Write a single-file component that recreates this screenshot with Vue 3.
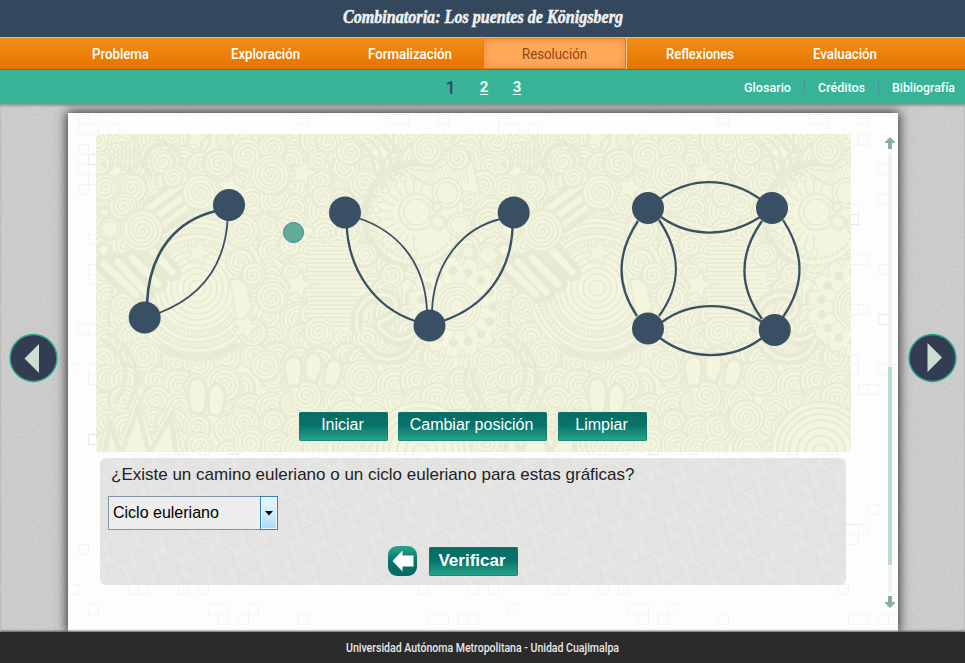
<script setup>
const tabs = [
  { label: 'Problema', w: 57 },
  { label: 'Exploración', w: 69 },
  { label: 'Formalización', w: 84 },
  { label: 'Resolución', w: 65, active: true },
  { label: 'Reflexiones', w: 68 },
  { label: 'Evaluación', w: 64 },
]
const links = [
  { label: 'Glosario', w: 47 },
  { label: 'Créditos', w: 47 },
  { label: 'Bibliografía', w: 63 },
]

const nodes = [
  [229, 205], [144.7, 317.5], [345, 212.5], [513.7, 212.5], [429.5, 325.5],
  [648, 208], [772, 208], [648, 328.5], [774.7, 330],
]
const edges = [
  ['M147,304 C149,250 178,220 216,211', 2.6],
  ['M227.7,219 C225,265 203,296 159,313', 1.8],
  ['M346.7,226 C349,272 376,308 415,321', 2.3],
  ['M358,218 C395,230 425,260 427,311', 1.8],
  ['M432,311 C434,260 465,227 501,219', 1.8],
  ['M512.7,226 C511,272 486,306 443,321', 2.3],
  ['M660,199 C690,176.5 728,176.5 760,199', 2.3],
  ['M661,217 C690,237.7 728,237.7 760,217', 2.3],
  ['M662,322 C690,300.7 732,300.7 762,322', 2.3],
  ['M660,338 C690,360.7 732,360.7 762,338', 2.3],
  ['M638,221 C616,254 616,285 637,316', 2.3],
  ['M659,220 C681.7,254 681.7,285 659,316', 2.3],
  ['M762,221 C738.7,254 738.7,287 762,319', 2.3],
  ['M783,220 C805,254 805,285 783,317', 2.3],
]

// Doodle wallpaper: one 400px wide tile, drawn back to front.
const spiral = (x, y, r) => {
  let d = ''
  const turns = r / 4.4
  const steps = Math.round(turns * 14)
  for (let i = 0; i <= steps; i++) {
    const a = (i / 14) * Math.PI * 2 + x
    const q = (r * i) / steps
    d += `${i ? 'L' : 'M'}${(x + q * Math.cos(a)).toFixed(1)},${(y + q * Math.sin(a)).toFixed(1)}`
  }
  return { x, y, r, d }
}
let seed = 11
const rnd = () => (seed = (seed * 16807) % 2147483647) / 2147483647
const filler = []
for (let y = 6; y < 330; y += 22)
  for (let x = 8; x < 400; x += 24)
    filler.push(spiral(x + rnd() * 14 - 7, y + rnd() * 12 - 6, 12 + rnd() * 6))
const spirals = [
  [151, 21, 16], [177, 13, 14], [122, 30, 15], [104, 59, 18], [146, 96, 17], [67, 28, 12], [77, 44, 10],
  [36, 54, 15], [27, 73, 14], [9, 54, 14], [46, 96, 21], [249, 34, 14], [232, 8, 12], [224, 46, 12],
  [144, 128, 14], [157, 141, 12], [176, 164, 16], [194, 138, 9], [157, 198, 14], [26, 171, 12],
  [222, 198, 15], [227, 63, 11], [254, 18, 13], [332, 16, 16], [362, 24, 12], [269, 121, 12],
  [296, 141, 12], [175, 41, 20], [48, 222, 17], [128, 250, 18], [170, 232, 15], [210, 262, 16], [250, 284, 18],
].map((s) => spiral(...s))
const rings = [[351, 59, 15], [321, 78, 18], [363, 91, 12], [392, 121, 12], [341, 73, 5], [342, 88, 8], [372, 118, 8], [14, 95, 11], [8, 78, 6], [8, 116, 7]]
const star = (x, y, r) =>
  Array.from({ length: 10 }, (_, i) => {
    const q = i % 2 ? r * 0.45 : r
    const a = (i * Math.PI) / 5 - 1.3
    return `${(x + q * Math.cos(a)).toFixed(1)},${(y + q * Math.sin(a)).toFixed(1)}`
  }).join(' ')
const stars = [star(102, 119, 14), star(207, 39, 15), star(202, 151, 16), star(149, 193, 16), star(100, 4, 13), star(133, 54, 15)]
const petals = Array.from({ length: 15 }, (_, i) => {
  const a = (i * Math.PI * 2) / 15
  const c = Math.cos(a), s = Math.sin(a)
  return { x1: 26 * c, y1: 26 * s, x: 38 * c, y: 38 * s, ox: 45 * c, oy: 45 * s }
})
const spokes = Array.from({ length: 13 }, (_, i) => {
  const a = Math.PI * 0.5 + (i * Math.PI) / 11
  return { c: Math.cos(a), s: Math.sin(a) }
})
const beads = Array.from({ length: 14 }, (_, i) => {
  const a = Math.PI * 0.75 + (i * Math.PI) / 10
  return [67 + 18 * Math.cos(a), 28 + 18 * Math.sin(a)]
})

// Embossed squares of the paper background, on a 10px grid.
const squares = []
for (let i = 0; i < 210; i++) {
  const w = rnd() > 0.7 ? 20 : 10
  squares.push([Math.floor(rnd() * 41) * 10 + 0.5, Math.floor(rnd() * 51) * 10 + 1.5, w, rnd() > 0.9 ? '#e9e9e9' : '#f4f4f4'])
}
</script>

<template>
  <div class="page">
    <header class="title">
      <svg width="284" height="34"><text x="2" y="23" textLength="280" lengthAdjust="spacingAndGlyphs">Combinatoria: Los puentes de Königsberg</text></svg>
    </header>

    <nav class="tabs">
      <a v-for="t in tabs" :key="t.label" class="tab" :class="{ active: t.active }">
        <svg :width="t.w + 4" height="24"><text x="2" y="17" :textLength="t.w" lengthAdjust="spacingAndGlyphs">{{ t.label }}</text></svg>
      </a>
    </nav>

    <div class="sub">
      <div class="steps"><b>1</b><a>2</a><a>3</a></div>
      <div class="links">
        <a v-for="l in links" :key="l.label">
          <svg :width="l.w + 4" height="22"><text x="2" y="16" :textLength="l.w" lengthAdjust="spacingAndGlyphs">{{ l.label }}</text></svg>
        </a>
      </div>
    </div>

    <main class="main">
      <svg class="grain" width="965" height="528">
        <filter id="noise" x="0" y="0" width="100%" height="100%">
          <feTurbulence type="fractalNoise" baseFrequency="0.4" numOctaves="3" seed="4" />
          <feColorMatrix values="0 0 0 0 0.35  0 0 0 0 0.35  0 0 0 0 0.35  0.28 0 0 0 -0.08" />
        </filter>
        <rect width="965" height="528" filter="url(#noise)" />
      </svg>

      <div class="side">
        <svg width="50" height="50" viewBox="0 0 50 50">
          <circle cx="24.500" cy="25" r="23.400" fill="#343c51" stroke="#2aa68d" stroke-width="1.500" />
          <path d="M15.500 25.500 L30 11 V40 Z" fill="#cbdfd1" />
        </svg>
      </div>

      <section class="panel">
        <svg class="tiles" width="830" height="519">
          <defs>
            <pattern id="tiles" width="420" height="519" patternUnits="userSpaceOnUse">
              <rect v-for="(t, i) in squares" :key="i" :x="t[0]" :y="t[1]" :width="t[2]" height="10" fill="none" :stroke="t[3]" />
            </pattern>
          </defs>
          <rect width="830" height="519" fill="url(#tiles)" />
        </svg>

        <div class="content">
          <div class="board">
            <svg class="scene" width="755" height="318" viewBox="96 134 755 318">
              <defs>
                <pattern id="doodle" x="96" y="134" width="400" height="330" patternUnits="userSpaceOnUse">
                  <rect width="400" height="330" fill="#f4f5df" />
                  <g fill="#f4f5df" stroke="#e9ead4" stroke-width="1.500">
                    <template v-for="(s, i) in filler" :key="i">
                      <circle :cx="s.x" :cy="s.y" :r="s.r" /><path :d="s.d" fill="none" />
                    </template>

                    <circle v-for="r in [70, 65, 60, 54, 49, 43, 38, 32, 26, 20, 14, 8]" :key="r" cx="101" cy="154" :r="r" />
                    <circle cx="101" cy="154" r="46" fill="none" stroke-width="4" stroke-dasharray="1.500 2" />
                    <circle cx="101" cy="154" r="57" fill="none" stroke-width="5" stroke-dasharray="1.500 2.500" />
                    <path d="M62 212 A70 70 0 0 0 142 210" fill="none" stroke-width="7" />

                    <path d="M48 72 L90 40 L106 66 L60 100Z" />
                    <path d="M50 70L75 50M55 80L90 54M60 90L98 62M68 98L104 72" stroke-width="5" />
                    <path d="M8 130 L40 160 M22 128 L50 158 M36 124 L62 150 M54 114 L76 138" stroke-width="19" stroke-linecap="round" />
                    <path d="M8 130 L40 160 M22 128 L50 158 M36 124 L62 150 M54 114 L76 138" stroke="#f4f5df" stroke-width="7" stroke-linecap="round" />
                    <path d="M212 110H270V195H212Z" stroke="none" />
                    <path v-for="i in 20" :key="'h' + i" :d="`M210 ${108 + i * 4.2}H${262 + (i % 4) * 3}`" />
                    <path d="M170 117 L200 140 L194 153Z M134 145 L141 190 L158 188 L150 145Z M170 80 L218 94 L215 103Z" />

                    <circle cx="318" cy="81" r="50" />
                    <path d="M325 29 A53 53 0 0 0 312 134" fill="none" stroke-width="7" />
                    <circle cx="318" cy="81" r="44" stroke-width="3" stroke-dasharray="4 2" />
                    <g v-for="(s, i) in spokes" :key="'s' + i">
                      <path :d="`M${318 + 20 * s.c} ${81 + 20 * s.s}L${318 + 35 * s.c} ${81 + 35 * s.s}`" />
                      <circle :cx="318 + 38 * s.c" :cy="81 + 38 * s.s" r="3.500" />
                    </g>
                    <path d="M302 32 L334 38 L374 20 L384 60 L330 50Z" />
                    <path v-for="i in 16" :key="'d' + i" :d="`M${306 + i * 4} 35 L${318 + i * 3.4} 50`" stroke-width="1" />
                    <template v-for="(c, i) in rings" :key="'r' + i">
                      <circle :cx="c[0]" :cy="c[1]" :r="c[2]" stroke-width="2" /><circle :cx="c[0]" :cy="c[1]" :r="c[2] * 0.72" stroke-width="1.500" />
                    </template>

                    <path d="M262 198 C250 160 300 150 300 172 S268 180 290 200 S330 178 320 205 S280 230 268 212" fill="none" stroke-width="12" />
                    <path d="M262 198 C250 160 300 150 300 172 S268 180 290 200 S330 178 320 205 S280 230 268 212" fill="none" stroke="#f4f5df" stroke-width="3" />

                    <g transform="translate(361 173) scale(0.95)">
                      <circle r="52" stroke-dasharray="2 2" stroke-width="4" />
                      <circle v-for="(p, i) in petals" :key="i" :cx="p.ox" :cy="p.oy" r="8" />
                      <circle r="44" stroke="none" />
                      <template v-for="(p, i) in petals" :key="'p' + i">
                        <path :d="`M${p.x1} ${p.y1}L${p.x} ${p.y}`" /><circle :cx="p.x" :cy="p.y" r="4" fill="#e8e9d2" />
                      </template>
                      <circle v-for="r in [25, 21, 17, 13, 8]" :key="'c' + r" :r="r" />
                    </g>

                    <path d="M262 8 C285 20 270 38 292 52 M270 4 C294 18 278 34 298 46 M278 2 C303 16 287 30 303 40 M287 0 C310 16 296 25 308 34" fill="none" stroke-width="3" />
                    <path d="M12 10 L35 8 L42 0 M14 14V34 M18 13V34 M22 13V34 M26 12V34 M30 12V34 M34 11V34 M38 10V34 M42 8V30" fill="none" />
                    <path d="M8 30 C14 36 20 25 27 34 S40 26 48 32" fill="none" stroke-width="5" stroke-dasharray="0.100 7" stroke-linecap="round" />

                    <template v-for="(s, i) in spirals" :key="'z' + i">
                      <circle :cx="s.x" :cy="s.y" :r="s.r" /><path :d="s.d" fill="none" />
                    </template>
                    <circle v-for="(b, i) in beads" :key="'b' + i" :cx="b[0]" :cy="b[1]" r="2.600" fill="#e8e9d2" stroke="none" />
                    <polygon v-for="s in stars" :key="s" :points="s" />

                    <path d="M0 330 L12 280 L25 306 L42 260 L56 306 L76 268 L88 330Z" />
                    <path d="M8 320L14 290L25 320L42 274L53 320L75 282L80 322" fill="none" stroke-width="5" />
                    <circle v-for="r in [50, 44, 38, 32, 24, 16, 8]" :key="'q' + r" cx="325" cy="318" :r="r" stroke-width="2" />
                    <path d="M192 252 q-9 -28 6 -30 q13 2 5 30Z M210 246 q-5 -30 10 -27 q12 6 0 30Z M228 250 q0 -28 14 -24 q10 7 -4 28Z M95 278 q-8 -34 7 -34 q14 4 5 36Z M113 280 q-4 -32 10 -30 q12 8 1 32Z" stroke-width="3" />
                    <path d="M5 205 C30 220 38 245 18 270 M10 198 C40 216 50 240 30 276 M372 235 C356 262 398 270 376 310 M380 233 C366 260 408 270 386 312" fill="none" stroke-width="4" />
                  </g>
                </pattern>
              </defs>
              <rect x="96" y="134" width="755" height="318" fill="url(#doodle)" />
              <path v-for="e in edges" :key="e[0]" :d="e[0]" fill="none" stroke="#395064" :stroke-width="e[1]" />
              <circle v-for="n in nodes" :key="n.join()" :cx="n[0]" :cy="n[1]" r="16" fill="#395064" />
              <circle cx="293.500" cy="232.500" r="10" fill="#64ac95" stroke="#3482ae" />
            </svg>
            <div class="actions">
              <button class="btn">Iniciar</button>
              <button class="btn wide">Cambiar posición</button>
              <button class="btn">Limpiar</button>
            </div>
          </div>

          <div class="question">
            <svg class="waves" width="746" height="127">
              <defs>
                <pattern id="waves" width="26" height="20" patternUnits="userSpaceOnUse" patternTransform="rotate(12)">
                  <g fill="none" stroke="#dededd" stroke-width="1.200">
                    <path d="M0 0L26 20M0 4L21 20M0 8L16 20M5 0L26 16M10 0L26 12" />
                    <circle cx="13" cy="10" r="7.500" fill="#e6e6e5" /><circle cx="13" cy="10" r="4.500" /><circle cx="13" cy="10" r="1.500" />
                  </g>
                </pattern>
              </defs>
              <rect width="746" height="127" fill="url(#waves)" />
            </svg>
            <p class="ask">¿Existe un camino euleriano o un ciclo euleriano para estas gráficas?</p>
            <div class="select">
              <span>Ciclo euleriano</span>
              <i><svg width="8" height="5"><path d="M0 0H8L4 4.500Z" fill="#000" /></svg></i>
            </div>
            <div class="check">
              <button class="back">
                <svg width="22" height="22" viewBox="0 0 22 22"><path d="M0.500 11 L10.500 0.500 V5.500 H21.500 V16.500 H10.500 V21.500Z" fill="#fff" /></svg>
              </button>
              <button class="btn bold">Verificar</button>
            </div>
          </div>
        </div>

        <div class="scroll">
          <svg width="10" height="12"><path d="M5 0L10 5V6H7V12H3V6H0V5Z" fill="#8aaba6" /></svg>
          <div class="track"><div class="thumb"></div></div>
          <svg width="10" height="12"><path d="M5 12L10 7V6H7V0H3V6H0V7Z" fill="#8aaba6" /></svg>
        </div>
      </section>

      <div class="side">
        <svg width="50" height="50" viewBox="0 0 50 50">
          <circle cx="25.500" cy="25" r="23.400" fill="#343c51" stroke="#2aa68d" stroke-width="1.500" />
          <path d="M35 24.500 L20.500 10 V39 Z" fill="#cbdfd1" />
        </svg>
      </div>
    </main>

    <footer class="foot">
      <svg width="278" height="20"><text x="2" y="14" textLength="273" lengthAdjust="spacingAndGlyphs">Universidad Autónoma Metropolitana - Unidad Cuajimalpa</text></svg>
    </footer>
  </div>
</template>

<style>
body { margin: 0; overflow: hidden; }
</style>

<style scoped>
.page { width: 965px; height: 663px; display: flex; flex-direction: column; font-family: Roboto, sans-serif; overflow: hidden; }
svg { display: block; flex: none; overflow: visible; }

.title {
  height: 37px; display: flex; justify-content: center; box-sizing: border-box; background-color: #34495e;
  background-image:
    repeating-linear-gradient(45deg, rgba(15, 30, 50, .28) 0 1px, transparent 1px 2.83px),
    repeating-linear-gradient(-45deg, rgba(110, 140, 160, .16) 0 1px, transparent 1px 2.83px);
}
.title text { font: italic bold 19px "Liberation Serif", serif; fill: #f1f1f1; stroke: #f1f1f1; stroke-width: .5px; }

.tabs {
  height: 33px; box-sizing: border-box; display: flex; justify-content: center;
  border-top: 1px solid #f7b96c; border-bottom: 1px solid #b95a08;
  background: linear-gradient(#f08e1b, #e67700 90%, #e17000);
}
.tab { width: 145px; display: flex; align-items: center; justify-content: center; box-sizing: border-box; }
.tab text { font-size: 15px; font-weight: 500; fill: #fff; }
.tab.active {
  width: 143px; margin: 0 2px 0 0; background: #ffa95b; border: 1px solid #e27b22; padding-left: 1px;
  box-shadow: inset 0 0 9px #f3893f, 1px 0 0 #ffc88c;
}
.tab.active text { fill: #924411; font-weight: 400; }

.sub { height: 34px; background: #38b398; display: grid; grid-template-columns: 1fr auto 1fr; align-items: center; }
.steps { grid-column: 2; display: flex; gap: 24px; align-items: center; color: #e9fff8; font-weight: 700; font-size: 15px; padding-left: 2px; }
.steps b { font-size: 18px; font-weight: 500; color: #34496a; width: 10px; text-align: center; }
.steps a { text-decoration: underline; text-underline-offset: 2px; width: 9px; text-align: center; }
.links { justify-self: end; display: flex; padding-right: 8px; }
.links text { font-size: 13.5px; font-weight: 500; fill: #f4fffb; }
.links a + a { margin-left: 11px; padding-left: 11px; border-left: 1px solid #4b918f; }
.links a { height: 14px; display: flex; align-items: center; }

.main {
  height: 528px; position: relative; display: flex; overflow: hidden; background: #cecece;
  box-shadow: inset 0 2px 2px #999;
}
.grain { position: absolute; inset: 0; }
.side { position: relative; width: 68px; display: flex; align-items: center; justify-content: center; padding-bottom: 20px; box-sizing: border-box; flex: none; }
.side:last-child { width: 67px; }
.panel { position: relative; width: 830px; height: 519px; margin-top: 9px; background: #fdfdfd; box-shadow: 0 0 11px 1px rgba(0, 0, 0, .8); display: flex; flex: none; }
.tiles { position: absolute; inset: 0; }
.content { position: relative; width: 817px; padding: 21px 0 0 28px; box-sizing: border-box; }
.board { position: relative; width: 755px; height: 318px; border-radius: 4px; overflow: hidden; display: flex; align-items: flex-end; }
.scene { position: absolute; inset: 0; }
.actions { position: relative; display: flex; gap: 11px; padding: 0 0 11px 203px; }
.btn {
  width: 89px; height: 29px; padding: 0 2px 4px 0; border: 0; border-radius: 2px; color: #fff;
  font: 16px "Liberation Sans", Arial, sans-serif; white-space: nowrap;
  background: linear-gradient(#086b63, #07736a 45%, #2aa68d); box-shadow: inset 0 0 0 1px rgba(20, 120, 105, .6);
}
.btn.wide { width: 149px; margin-left: -1px; }
.btn.bold { font-weight: bold; font-size: 17px; padding: 0 3px 1px 0; }

.question { position: relative; margin: 6px 0 0 4px; width: 746px; height: 127px; border-radius: 6px; overflow: hidden; background: #e6e6e5; font-family: "Liberation Sans", Arial, sans-serif; }
.waves { position: absolute; inset: 0; }
.ask { position: relative; margin: 0; padding: 6px 0 0 11px; font-size: 17px; line-height: 21px; height: 32px; box-sizing: content-box; color: #222; white-space: nowrap; }
.select { position: relative; margin-left: 8px; width: 170px; height: 34px; box-sizing: border-box; border: 1px solid #8393a3; background: #eee; display: flex; align-items: center; justify-content: space-between; font-size: 16px; color: #000; }
.select span { padding-left: 4px; }
.select i { width: 18px; height: 34px; margin-right: -1px; box-sizing: border-box; border: 1px solid #3c7fb1; box-shadow: inset 0 0 0 1px #eaf7fe; background: linear-gradient(#e6f5fd, #d2edfc 50%, #a5daf7); display: flex; align-items: center; justify-content: center; }
.check { position: relative; display: flex; align-items: center; gap: 12px; padding: 16px 0 0 288px; }
.back { width: 29px; height: 30px; padding: 0; border: 0; border-radius: 9px; background: linear-gradient(#2aa68d, #0a7268 50%, #086b63); display: flex; align-items: center; justify-content: center; }

.scroll { position: relative; width: 10px; display: flex; flex-direction: column; align-items: center; padding-top: 24px; height: 472px; }
.track { width: 4px; height: 439px; margin: 4px 0; background: #edf4f1; display: flex; flex-direction: column; }
.thumb { height: 198px; margin-top: 214px; background: #bcdccd; }

.foot { height: 31px; flex: none; background: #2b2b2b; display: flex; align-items: center; justify-content: center; box-shadow: 0 -1px 2px #555; position: relative; }
.foot text { font-size: 12px; font-weight: 500; fill: #e9e9e9; }
</style>
